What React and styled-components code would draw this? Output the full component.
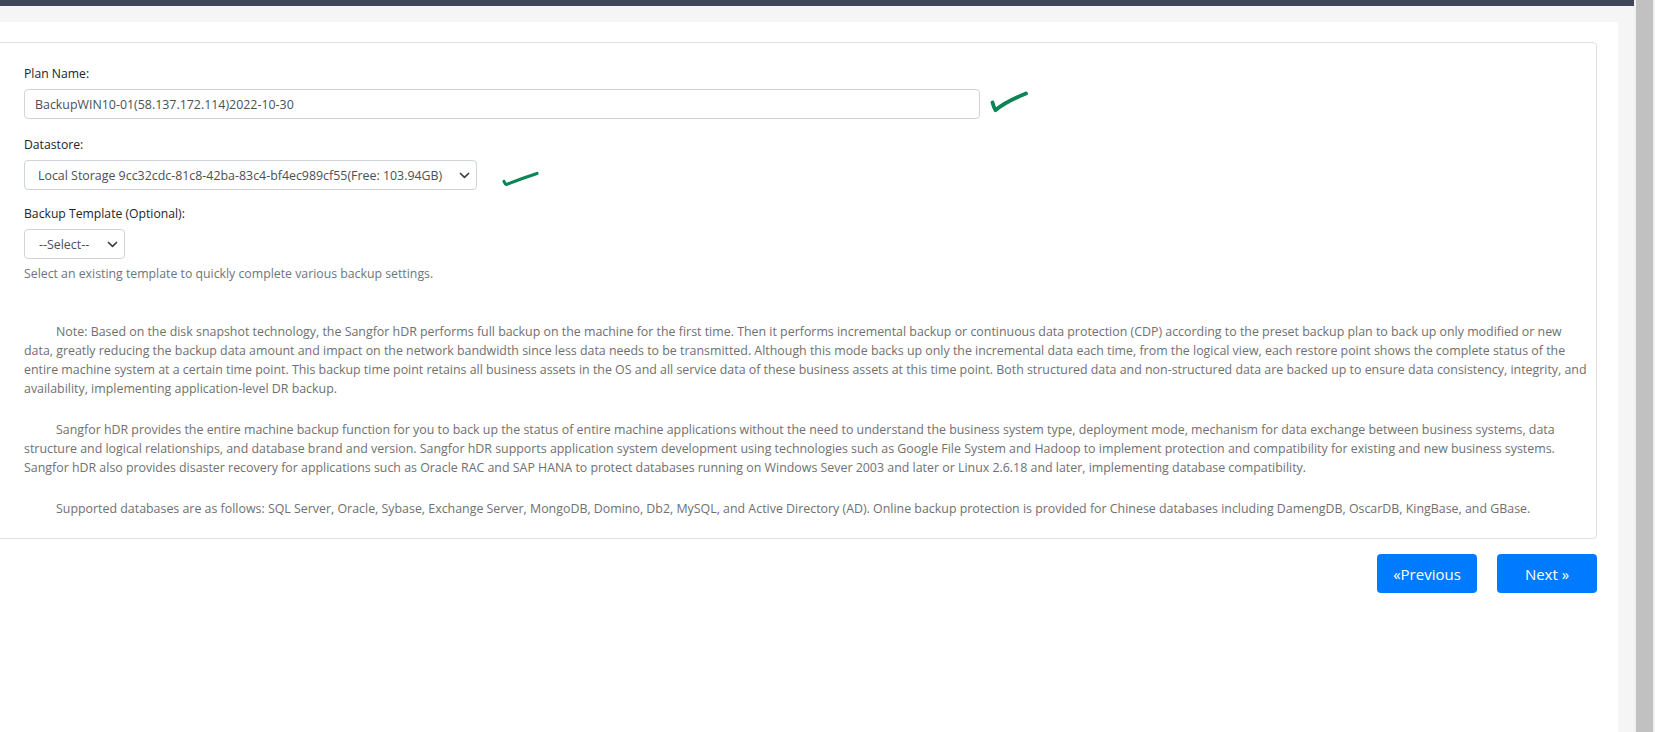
import React from "react";
import styled, { createGlobalStyle } from "styled-components";

const GlobalStyle = createGlobalStyle`
  html, body {
    margin: 0;
    padding: 0;
    height: 100%;
    overflow: hidden;
  }
  body {
    font-family: "Open Sans", "Noto Sans", sans-serif;
    color: #212529;
    background: #ffffff;
  }
  * { box-sizing: border-box; }
`;

const Window = styled.div`
  display: flex;
  height: 732px;
  width: 100%;
  overflow: hidden;
`;

const Viewport = styled.div`
  flex: 1;
  display: flex;
  flex-direction: column;
  min-width: 0;
`;

const TopBar = styled.div`
  height: 6px;
  background: #3e4757;
  flex-shrink: 0;
`;

const Workspace = styled.div`
  flex: 1;
  display: flex;
  background: #f5f5f5;
  padding: 16px 16px 0 0;
`;

const Panel = styled.main`
  flex: 1;
  background: #ffffff;
  padding: 20px 21px 0 0;
`;

const Card = styled.section`
  margin-left: -3px;
  border: 1px solid #e0e0e0;
  border-radius: 4px;
  padding: 21px 7px 20px 26px;
`;

const Field = styled.div`
  margin-bottom: ${(p) => p.$gap ?? 16}px;
`;

const Label = styled.label`
  display: block;
  font-size: 12.2px;
  line-height: 20px;
  color: #212529;
  margin-bottom: 5px;
`;

const FieldRow = styled.div`
  display: flex;
  align-items: center;
  gap: ${(p) => p.$gap}px;
`;

const TextInput = styled.input`
  width: ${(p) => p.$width}px;
  height: 30px;
  border: 1px solid #ced4da;
  border-radius: 4px;
  padding: 0 10px;
  font-family: inherit;
  font-size: 12.4px;
  color: #495057;
  background: #fff;
  outline: none;
`;

const SelectWrap = styled.div`
  position: relative;
  width: ${(p) => p.$width}px;
`;

const Select = styled.select`
  appearance: none;
  -webkit-appearance: none;
  width: 100%;
  height: 30px;
  border: 1px solid #ced4da;
  border-radius: 4px;
  padding: 0 30px 0 ${(p) => p.$padLeft ?? 13}px;
  font-family: inherit;
  font-size: 12.4px;
  color: #495057;
  background: #fff;
  outline: none;
`;

const Chevron = styled.svg`
  position: absolute;
  right: ${(p) => p.$right}px;
  top: 12px;
  width: 11px;
  height: 7px;
  pointer-events: none;
`;

const Hint = styled.div`
  font-size: 12.3px;
  line-height: 20px;
  color: #6c757d;
  margin-top: 5px;
`;

const Notes = styled.div`
  margin-top: 38px;
`;

const Note = styled.p`
  margin: 0 0 ${(p) => (p.$last ? 0 : 22)}px;
  font-size: 12.4px;
  line-height: 19px;
  color: #707070;
  text-indent: 32px;
`;

const Actions = styled.div`
  display: flex;
  justify-content: flex-end;
  gap: 20px;
  margin-top: 15px;
`;

const Button = styled.button`
  width: 100px;
  height: 39px;
  border: none;
  border-radius: 4px;
  background: #007bff;
  color: #ffffff;
  font-family: inherit;
  font-size: 15px;
  cursor: pointer;
`;

const Scrollbar = styled.div`
  width: 21px;
  flex-shrink: 0;
  background: #f1f1f1;
  display: flex;
  padding-left: 2px;
`;

const Thumb = styled.div`
  width: 17px;
  background: #c1c1c1;
`;

const Tick = styled.svg`
  flex-shrink: 0;
  margin-top: ${(p) => p.$dy ?? 0}px;
`;

function ChevronIcon({ right }) {
  return (
    <Chevron $right={right} viewBox="0 0 11 7">
      <polyline
        points="1.5,1.5 5.5,5.3 9.5,1.5"
        fill="none"
        stroke="#3a3f44"
        strokeWidth="1.7"
        strokeLinecap="round"
        strokeLinejoin="round"
      />
    </Chevron>
  );
}

export default function App() {
  return (
    <>
      <GlobalStyle />
      <Window>
        <Viewport>
          <TopBar />
          <Workspace>
            <Panel>
              <Card>
                <Field>
                  <Label htmlFor="plan-name">Plan Name:</Label>
                  <FieldRow $gap={10}>
                    <TextInput
                      id="plan-name"
                      $width={956}
                      defaultValue="BackupWIN10-01(58.137.172.114)2022-10-30"
                    />
                    <Tick width="38" height="22" viewBox="0 0 38 22" $dy={-4}>
                      <path
                        d="M2.5 11.5 Q4 17 5.5 19.2 Q15 11 36 2.5"
                        fill="none"
                        stroke="#0b8457"
                        strokeWidth="3.8"
                        strokeLinecap="round"
                        strokeLinejoin="round"
                      />
                    </Tick>
                  </FieldRow>
                </Field>

                <Field $gap={14}>
                  <Label htmlFor="datastore">Datastore:</Label>
                  <FieldRow $gap={25}>
                    <SelectWrap $width={453}>
                      <Select id="datastore" defaultValue="local">
                        <option value="local">
                          Local Storage 9cc32cdc-81c8-42ba-83c4-bf4ec989cf55(Free: 103.94GB)
                        </option>
                      </Select>
                      <ChevronIcon right={7} />
                    </SelectWrap>
                    <Tick width="38" height="16" viewBox="0 0 38 16" $dy={7}>
                      <path
                        d="M2 10.5 Q3 13 4.5 13.5 Q18 8 35 2.5"
                        fill="none"
                        stroke="#0b8457"
                        strokeWidth="3.2"
                        strokeLinecap="round"
                        strokeLinejoin="round"
                      />
                    </Tick>
                  </FieldRow>
                </Field>

                <Field $gap={0}>
                  <Label htmlFor="template">Backup Template (Optional):</Label>
                  <SelectWrap $width={101}>
                    <Select id="template" defaultValue="" $padLeft={14}>
                      <option value="">--Select--</option>
                    </Select>
                    <ChevronIcon right={7} />
                  </SelectWrap>
                  <Hint>Select an existing template to quickly complete various backup settings.</Hint>
                </Field>

                <Notes>
                  <Note>
                    Note: Based on the disk snapshot technology, the Sangfor hDR performs full backup on the
                    machine for the first time. Then it performs incremental backup or continuous data
                    protection (CDP) according to the preset backup plan to back up only modified or new data,
                    greatly reducing the backup data amount and impact on the network bandwidth since less data
                    needs to be transmitted. Although this mode backs up only the incremental data each time,
                    from the logical view, each restore point shows the complete status of the entire machine
                    system at a certain time point. This backup time point retains all business assets in the
                    OS and all service data of these business assets at this time point. Both structured data
                    and non-structured data are backed up to ensure data consistency, integrity, and
                    availability, implementing application-level DR backup.
                  </Note>
                  <Note>
                    Sangfor hDR provides the entire machine backup function for you to back up the status of
                    entire machine applications without the need to understand the business system type,
                    deployment mode, mechanism for data exchange between business systems, data structure and
                    logical relationships, and database brand and version. Sangfor hDR supports application
                    system development using technologies such as Google File System and Hadoop to implement
                    protection and compatibility for existing and new business systems. Sangfor hDR also
                    provides disaster recovery for applications such as Oracle RAC and SAP HANA to protect
                    databases running on Windows Sever 2003 and later or Linux 2.6.18 and later, implementing
                    database compatibility.
                  </Note>
                  <Note $last>
                    Supported databases are as follows: SQL Server, Oracle, Sybase, Exchange Server, MongoDB,
                    Domino, Db2, MySQL, and Active Directory (AD). Online backup protection is provided for
                    Chinese databases including DamengDB, OscarDB, KingBase, and GBase.
                  </Note>
                </Notes>
              </Card>

              <Actions>
                <Button type="button">«Previous</Button>
                <Button type="button">Next »</Button>
              </Actions>
            </Panel>
          </Workspace>
        </Viewport>
        <Scrollbar>
          <Thumb />
        </Scrollbar>
      </Window>
    </>
  );
}
